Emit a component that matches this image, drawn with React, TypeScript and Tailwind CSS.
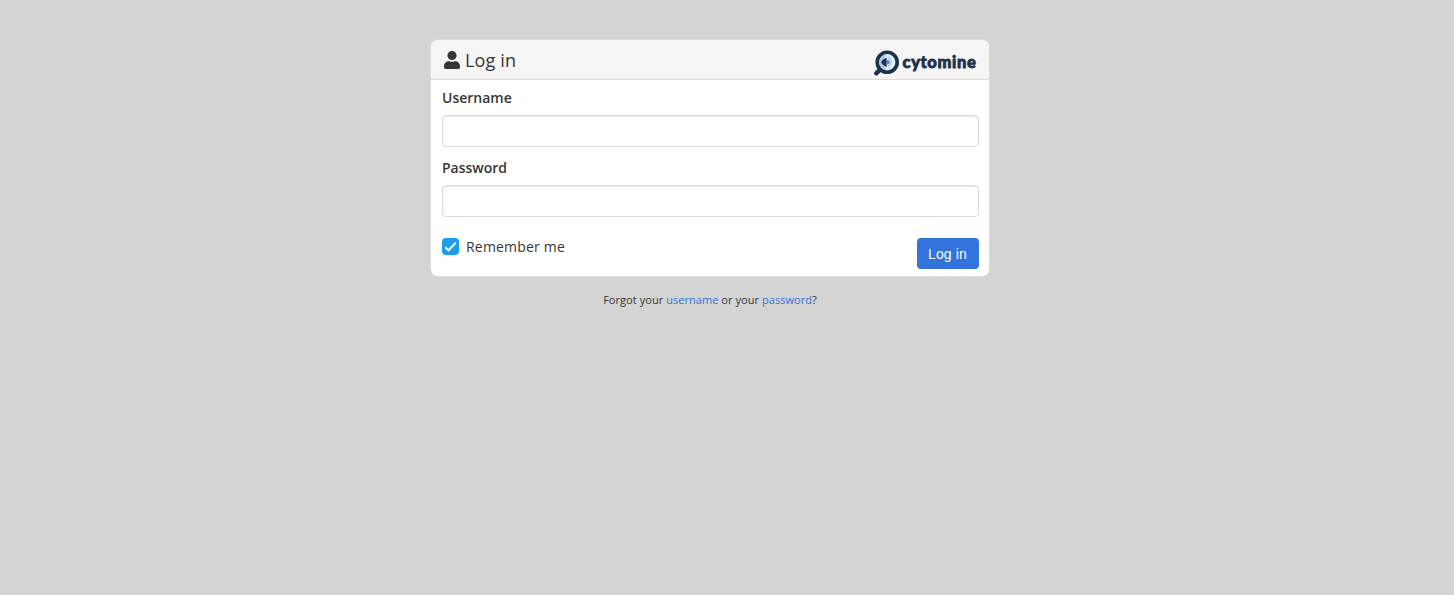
import { useState } from "react";

function UserIcon() {
  return (
    <svg className="ml-px h-[18px] w-4 shrink-0" viewBox="0 0 448 512" preserveAspectRatio="none" fill="#363636">
      <path d="M224 256c70.7 0 128-57.3 128-128S294.700 0 224 0 96 57.300 96 128s57.300 128 128 128zm89.600 32h-16.700c-22.200 10.200-46.900 16-72.900 16s-50.600-5.800-72.900-16h-16.700C60.200 288 0 348.200 0 422.400V464c0 26.500 21.500 48 48 48h352c26.500 0 48-21.500 48-48v-41.600c0-74.200-60.200-134.400-134.400-134.400z" />
    </svg>
  );
}

function Logo() {
  return (
    <svg width="104" height="28" viewBox="0 0 104 28" className="shrink-0" aria-label="cytomine">
      <path d="M6.800 20.800 3.200 24.300" stroke="#1d314a" strokeWidth="4.400" strokeLinecap="round" />
      <circle cx="14.200" cy="13.300" r="10" fill="#e3effa" stroke="#1d314a" strokeWidth="3.600" />
      <path d="M14 5.500a8 8 0 0 0-7.700 7.800A8 8 0 0 0 14 21.200c-2.400-2-3.800-4.800-3.800-7.900S11.600 7.500 14 5.500z" fill="#a9c8e8" />
      <path d="M14.800 7.500c2.800 1.300 4.200 3.400 4.200 5.800s-1.400 4.500-4.200 5.800z" fill="#b4d4f5" />
      <path d="M13.600 8.700v9.200c-2.200-.6-4.800-2.600-5.400-4.600.6-2 3.200-4 5.400-4.600z" fill="#1d314a" />
      <path d="M13.600 10.800c1.900.4 3.100 1.300 3.100 2.500s-1.200 2.100-3.100 2.500z" fill="#5f82aa" />
      <text
        x="29.500"
        y="18.500"
        textLength="73.400"
        lengthAdjust="spacing"
        fill="#1d314a"
        stroke="#1d314a"
        strokeWidth="0.800"
        strokeLinejoin="round"
        className="font-['Lato',sans-serif] text-[16.5px] font-black"
      >
        cytomine
      </text>
    </svg>
  );
}

function Field({ label, type }: { label: string; type: string }) {
  return (
    <label className="block h-[70px]">
      <span className="block pb-[7px] text-sm leading-[21px] font-semibold">{label}</span>
      <input
        type={type}
        className="block h-8 w-full rounded-[4px] border border-[#dbdbdb] bg-white px-2 shadow-[inset_0_1px_2px_rgba(10,10,10,0.1)] outline-none focus:border-[#3273dc]"
      />
    </label>
  );
}

export default function App() {
  const [remember, setRemember] = useState(true);
  return (
    <div className="min-h-screen bg-[#d4d4d4] pt-10 font-['Open_Sans',sans-serif] text-sm text-[#363636]">
      <main className="ml-[431px] w-[558px]">
        <form
          className="h-[236px] overflow-hidden rounded-[7px] bg-white shadow-[0_0_0_1px_#dbdbdb]"
          onSubmit={(e) => e.preventDefault()}
        >
          <header className="flex h-10 items-center justify-between border-b border-[#dbdbdb] bg-[#f5f5f5] pr-3 pl-3">
            <h1 className="flex items-center gap-[5px] text-lg leading-none tracking-[0.15px]">
              <UserIcon />
              Log in
            </h1>
            <div className="pt-[7px]">
              <Logo />
            </div>
          </header>
          <div className="pt-[7px] pr-[10px] pl-[11px]">
            <Field label="Username" type="text" />
            <Field label="Password" type="password" />
            <div className="flex items-start justify-between pt-[11px]">
              <label className="flex h-[17px] items-center gap-[7px] tracking-[0.2px]">
                <input
                  type="checkbox"
                  className="sr-only"
                  checked={remember}
                  onChange={(e) => setRemember(e.target.checked)}
                />
                <svg width="17" height="17" viewBox="0 0 17 17">
                  <rect width="17" height="17" rx="4" fill={remember ? "#209cee" : "#b5b5b5"} />
                  {remember && <path d="m3.300 9.200 3.200 3.100 7.300-7.600" fill="none" stroke="white" strokeWidth="1.900" />}
                </svg>
                Remember me
              </label>
              <button
                type="submit"
                className="h-[31px] w-[62px] rounded-[4px] bg-[#3273dc] pt-px pr-px font-['Liberation_Sans',sans-serif] text-sm tracking-[0.15px] text-white"
              >
                Log in
              </button>
            </div>
          </div>
        </form>
        <p className="pt-4 text-center text-[11px] leading-4 tracking-[0.05px]">
          Forgot your <a href="#username" className="text-[#3273dc]">username</a> or your{" "}
          <a href="#password" className="text-[#3273dc]">password</a>?
        </p>
      </main>
    </div>
  );
}
